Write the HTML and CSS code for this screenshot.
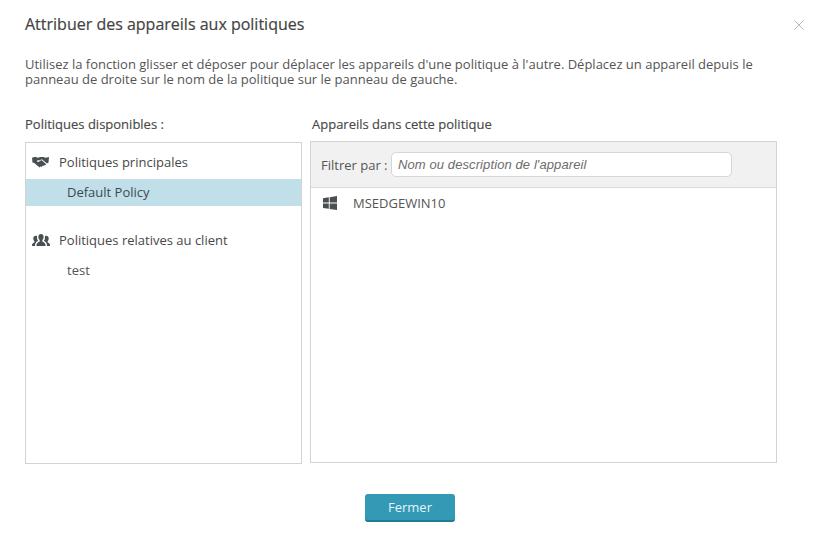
FILE: index.html
```html
<!DOCTYPE html>
<html lang="fr">
<head>
<meta charset="utf-8">
<title>Attribuer des appareils aux politiques</title>
<link rel="stylesheet" href="styles.css">
</head>
<body>
<div class="dialog">
  <header class="head">
    <h1 class="title">Attribuer des appareils aux politiques</h1>
    <svg class="close" viewBox="0 0 10 10" width="10" height="10"><path d="M.5.5l9 9M9.5.5l-9 9" fill="none" stroke="#b4b8ba" stroke-width="1"/></svg>
  </header>
  <p class="intro">Utilisez la fonction glisser et déposer pour déplacer les appareils d'une politique à l'autre. Déplacez un appareil depuis le panneau de droite sur le nom de la politique sur le panneau de gauche.</p>
  <div class="columns">
    <section class="col-left">
      <h2 class="label">Politiques disponibles :</h2>
      <div class="panel panel-left">
        <div class="group">
          <svg class="gicon gicon-hands" viewBox="0 0 18 12" width="17" height="12"><path fill="#4a4f52" d="M0 1.500 3.500 .5 6 1.500 9 .6 12 .6 14.500 1.500 18 .8 17.500 6.500 15.800 7.500 10.500 3 7.500 4.500 6.200 3.800 5 5.500 7 6 10 3.800 15 8.300 13.700 9.800 12.500 9.200 12.300 10.500 11 10 10.500 11.300 9.200 10.600 8.200 11.800 5.500 9.800 2.500 7 .5 6.500z"/></svg>
          <span>Politiques principales</span>
        </div>
        <div class="item item-active">Default Policy</div>
        <div class="group group-second">
          <svg class="gicon" viewBox="0 0 18 12" width="18" height="12"><path fill="#4a4f52" d="M9 0c1.700 0 2.600 1.300 2.600 3 0 1.300-.5 2.500-1.300 3.100v1.300c1.500.6 2.700 1.600 3.200 3.100V12h-9v-1.500c.5-1.500 1.700-2.500 3.200-3.100V6.100C6.900 5.500 6.400 4.300 6.400 3 6.400 1.300 7.300 0 9 0zM3.800 1.800c.5 0 .9.100 1.300.4-.1.700-.1 1.500 0 2.200.1.900.4 1.700.9 2.300v.3c-1.400.7-2.400 1.800-2.900 3.200V12H0v-1.300c.4-1.200 1.300-2 2.400-2.500v-1C1.700 6.600 1.300 5.600 1.300 4.500c0-1.600 1-2.700 2.500-2.700zm10.400 0c1.500 0 2.500 1.100 2.500 2.700 0 1.100-.4 2.100-1.100 2.700v1c1.100.5 2 1.300 2.400 2.500V12h-3.100v-1.800c-.5-1.400-1.500-2.500-2.900-3.200v-.3c.5-.6.800-1.400.9-2.300.1-.7.100-1.500 0-2.200.4-.3.800-.4 1.300-.4z"/></svg>
          <span>Politiques relatives au client</span>
        </div>
        <div class="item">test</div>
      </div>
    </section>
    <section class="col-right">
      <h2 class="label label-right">Appareils dans cette politique</h2>
      <div class="panel panel-right">
        <div class="filter">
          <label class="filter-label" for="f">Filtrer par :</label>
          <input class="filter-input" id="f" type="text" placeholder="Nom ou description de l'appareil">
        </div>
        <div class="device">
          <svg class="win" viewBox="0 0 14 14" width="14" height="14"><path fill="#4a4f52" d="M0 2.200 5.800 1.300V6.600H0zM6.700 1.200 14 0V6.600H6.700zM0 7.500H5.800V12.800L0 11.900zM6.700 7.500H14V14L6.700 12.900z"/></svg>
          <span>MSEDGEWIN10</span>
        </div>
      </div>
    </section>
  </div>
  <footer class="foot"><button class="btn" type="button">Fermer</button></footer>
</div>
</body>
</html>
```
FILE: styles.css
```css
* { box-sizing: border-box; }
html, body { margin: 0; padding: 0; background: #fff; }
body { width: 822px; height: 544px; overflow: hidden; font-family: "Open Sans", sans-serif; font-size: 13px; color: #555; }
.dialog { padding: 13px 45px 0 25px; }
.head { display: flex; align-items: center; justify-content: space-between; height: 23px; margin-right: -27px; }
.title { margin: 0; font-size: 16px; font-weight: 400; line-height: 23px; color: #444; -webkit-text-stroke: .2px #444; }
.close { display: block; }
.intro { margin: 21px 0 0; font-size: 13px; line-height: 15px; color: #555; }
.columns { display: flex; margin-top: 28px; gap: 8px; }
.col-left { width: 277px; flex: none; }
.col-right { flex: 1; }
.label { margin: 0 0 9px; font-size: 13px; font-weight: 500; line-height: 18px; color: #484848; -webkit-text-stroke: .15px #484848; }
.label-right { padding-left: 2px; }
.panel { border: 1px solid #d3d3d3; background: #fff; height: 322px; }
.panel-left { padding-top: 9px; }
.panel-right { margin-top: -1px; }
.group { display: flex; align-items: center; height: 20px; padding-left: 6px; font-weight: 500; color: #484848; }
.group span { margin-left: 9px; }
.gicon { display: block; flex: none; }
.gicon-hands { margin-right: 1px; }
.group-second { margin-top: 24px; }
.item { height: 27px; margin-top: 7px; padding-left: 41px; line-height: 26px; color: #555; }
.item-active { background: #c0dfe9; color: #3d4a50; font-weight: 500; }
.filter { display: flex; align-items: center; height: 46px; background: #f1f1f1; border-bottom: 1px solid #d9d9d9; padding: 0 44px 0 10px; }
.filter-label { flex: none; width: 70px; color: #555; white-space: nowrap; }
.filter-input { flex: 1; min-width: 0; height: 25px; padding: 0 6px; border: 1px solid #d6d6d6; border-radius: 5px; background: #fff; font-family: "Liberation Sans", sans-serif; font-size: 13px; font-style: italic; outline: none; letter-spacing: .1px; }
.filter-input::placeholder { color: #6c6c6c; opacity: 1; }
.device { display: flex; align-items: center; height: 28px; margin-top: 1px; padding-left: 12px; color: #555; }
.device span { margin-left: 16px; }
.win { display: block; flex: none; }
.foot { display: flex; justify-content: center; margin-top: 30px; padding-left: 18px; }
.btn { width: 90px; height: 28px; padding: 0; border: 0; border-bottom: 2px solid #1c7b96; border-radius: 3px; background: #3399b5; color: #e6f6fb; font-family: "Open Sans", sans-serif; font-size: 13px; }
```
